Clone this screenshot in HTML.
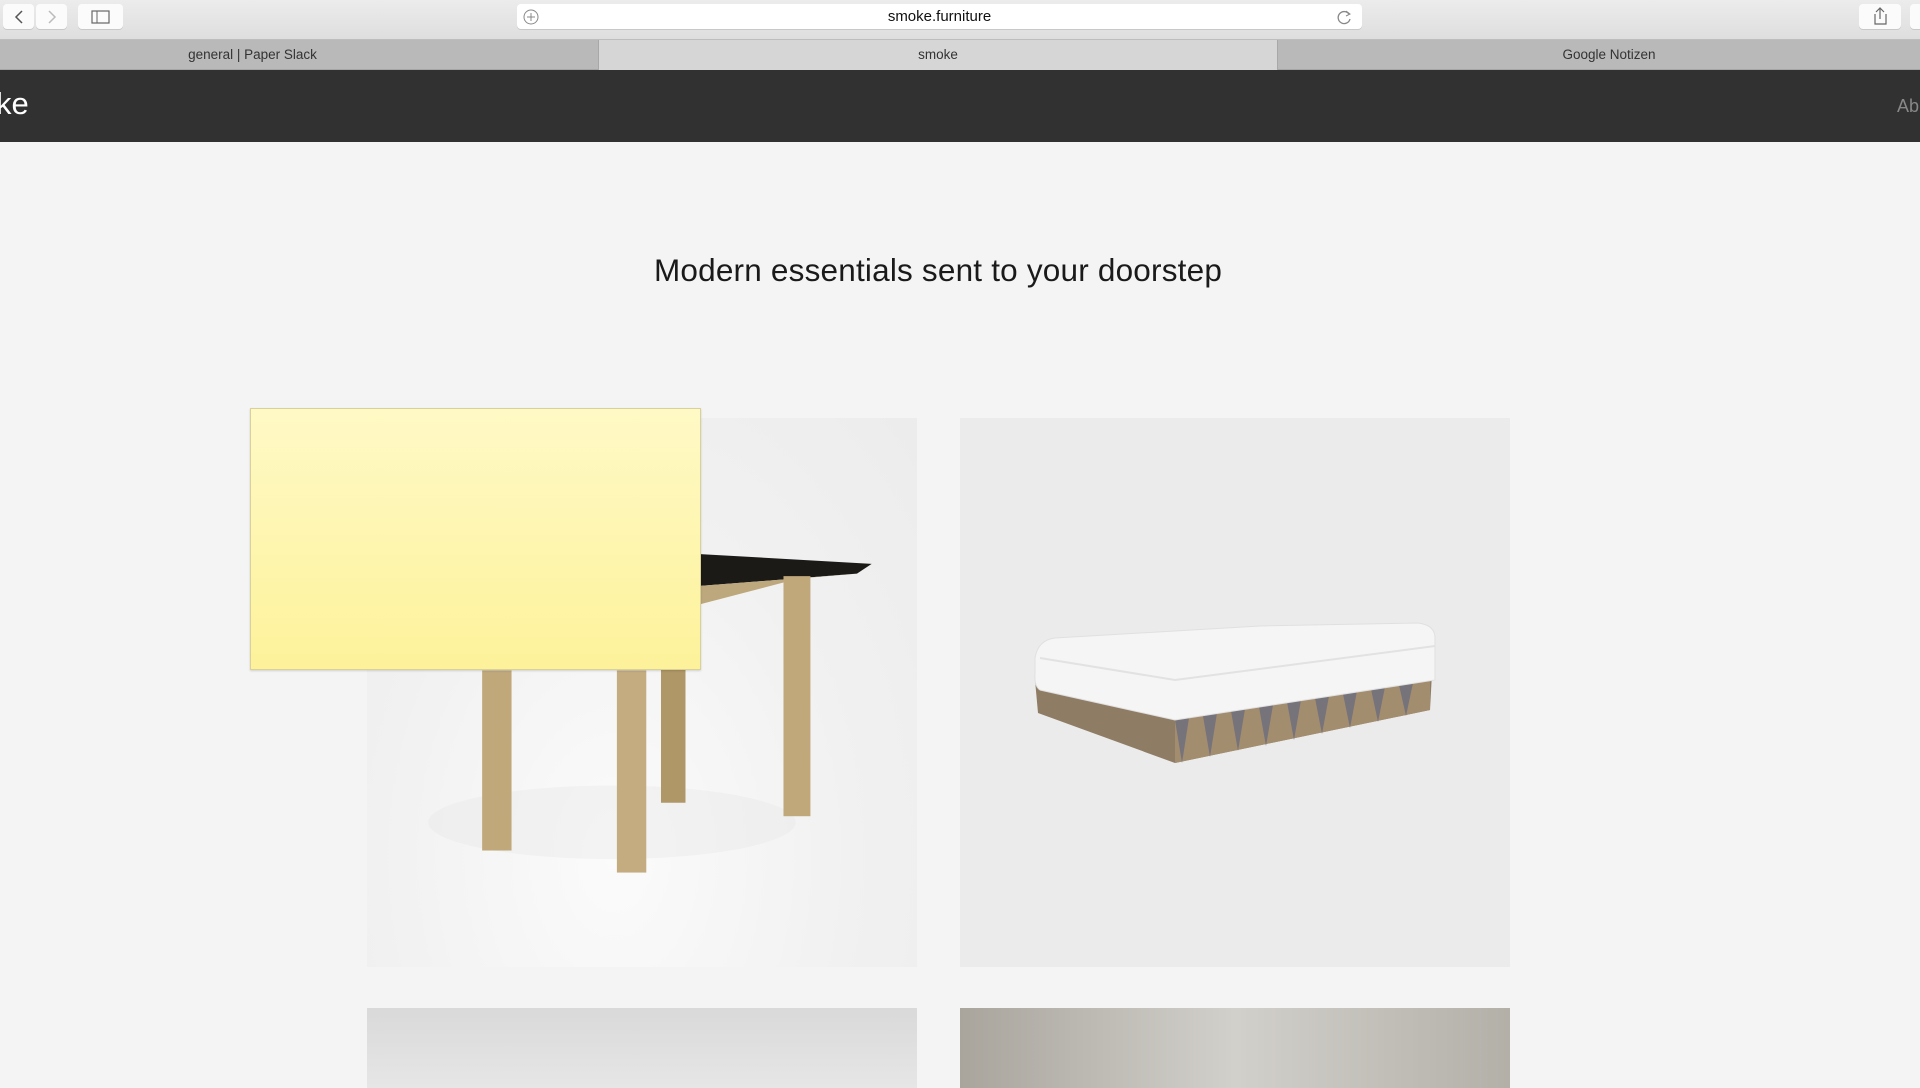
<!DOCTYPE html>
<html><head><meta charset="utf-8"><style>
*{margin:0;padding:0;box-sizing:border-box}
body{width:1920px;height:1080px;overflow:hidden;background:#f4f4f4;font-family:"Liberation Sans",sans-serif;position:relative}
.tb{position:absolute;left:0;top:0;width:1920px;height:40px;background:linear-gradient(#ececec,#dedede);border-bottom:1px solid #bdbdbd}
.btn{position:absolute;top:4px;height:25px;background:#fbfbfb;border-radius:4px;box-shadow:0 1px 0 #c8c8c8}
.url{position:absolute;left:517px;top:4px;width:845px;height:25px;background:#fff;border-radius:4px;box-shadow:0 1px 0 #c8c8c8;text-align:center;font-size:15px;line-height:25px;color:#111}
.tabs{position:absolute;left:0;top:40px;width:1920px;height:30px;background:#b9b9b9;font-size:13.5px;color:#333;border-bottom:1px solid #a5a5a5}
.tab{position:absolute;top:0;height:30px;line-height:30px;text-align:center;border-right:1px solid #a8a8a8}
.hdr{position:absolute;left:0;top:70px;width:1920px;height:72px;background:#313131;color:#fff}
h1{position:absolute;left:0;width:1876px;top:252px;text-align:center;font-weight:normal;font-size:31.5px;color:#1a1a1a;letter-spacing:.2px}
.card{position:absolute;width:550px}
</style></head><body>
<div class="tb">
 <div class="btn" style="left:3px;width:31px"><svg width="31" height="25"><path d="M19 7l-6 6 6 6" fill="none" stroke="#555" stroke-width="1.5"/></svg></div>
 <div class="btn" style="left:36px;width:31px"><svg width="31" height="25"><path d="M13 7l6 6-6 6" fill="none" stroke="#bbb" stroke-width="1.5"/></svg></div>
 <div class="btn" style="left:78px;width:45px"><svg width="45" height="25"><rect x="14" y="7" width="17" height="12" fill="none" stroke="#666" stroke-width="1.2"/><line x1="19" y1="7" x2="19" y2="19" stroke="#666"/></svg></div>
 <div class="url">smoke.furniture
  <svg style="position:absolute;left:5px;top:4px" width="18" height="18"><circle cx="9" cy="9" r="7" fill="none" stroke="#888"/><path d="M9 5v8M5 9h8" stroke="#888"/></svg>
  <svg style="position:absolute;right:8px;top:4px" width="18" height="18"><path d="M13 6a6 6 0 1 0 1 5" fill="none" stroke="#888" stroke-width="1.3"/><path d="M10 3l4 3-4 2" fill="none" stroke="#888"/></svg>
 </div>
 <div class="btn" style="left:1859px;width:42px"><svg width="42" height="25"><path d="M16 10v10h11V10M21 4v11M17 8l4-4 4 4" fill="none" stroke="#666" stroke-width="1.2"/></svg></div>
 <div class="btn" style="left:1910px;width:20px"></div>
</div>
<div class="tabs">
 <div class="tab" style="left:0;width:599px;padding-right:93px">general | Paper Slack</div>
 <div class="tab" style="left:599px;width:679px;background:#d6d6d6">smoke</div>
 <div class="tab" style="left:1278px;width:642px;border:none;padding-left:20px">Google Notizen</div>
</div>
<div class="hdr">
 <div style="position:absolute;left:-4px;top:16px;font-size:31px">ke</div>
 <div style="position:absolute;left:1897px;top:26px;font-size:18px;color:#888">Ab</div>
</div>
<h1>Modern essentials sent to your doorstep</h1>

<div class="card" style="left:367px;top:418px;height:549px;background:radial-gradient(ellipse at 45% 80%,#fbfbfb 0%,#f1f1f1 55%,#ececec 100%)">
<svg width="550" height="549" viewBox="0 0 449 448">
 <ellipse cx="200" cy="330" rx="150" ry="30" fill="#e4e4e4" opacity=".35"/>
 <polygon points="272,111 412,119 400,127 272,137" fill="#1c1a16"/>
 <polygon points="272,137 400,127 352,131 272,152" fill="#bda77c"/>
 <rect x="340" y="129" width="22" height="196" fill="#c0a87b"/>
 <rect x="240" y="199" width="20" height="115" fill="#b09767"/>
 <rect x="204" y="206" width="24" height="165" fill="#c4ac80"/>
 <rect x="94" y="206" width="24" height="147" fill="#c0a87b"/>
</svg></div>

<div class="card" style="left:960px;top:418px;height:549px;background:#ebebeb">
<svg width="550" height="549" viewBox="0 0 550 549">
 <polygon points="75,262 78,295 215,345 470,292 472,255" fill="#8f7c64"/>
 <polygon points="215,302 470,260 470,292 215,345" fill="#a38d6f"/>
 <g fill="#77737a">
  <polygon points="215,302 222,345 229,300"/><polygon points="243,298 250,339 257,295"/><polygon points="271,293 278,333 285,291"/><polygon points="299,289 306,328 313,287"/><polygon points="327,284 334,322 341,282"/><polygon points="355,280 362,316 369,278"/><polygon points="383,276 390,310 397,273"/><polygon points="411,271 418,304 425,269"/><polygon points="439,267 446,298 453,265"/>
 </g>
 <path d="M75,240 Q78,222 95,220 L300,208 L458,205 Q475,207 475,220 L475,262 L215,302 L80,272 Q74,268 75,255 Z" fill="#f5f5f5" stroke="#e0e0e0"/>
 <path d="M80,240 L215,262 L475,228" fill="none" stroke="#e2e2e2" stroke-width="2"/>
</svg></div>

<div class="card" style="left:367px;top:1008px;height:80px;background:linear-gradient(#d9d9d9,#e6e6e6)"></div>
<div class="card" style="left:960px;top:1008px;height:80px;background:linear-gradient(90deg,#a9a59d,#d2d0cb 50%,#b3b0a8)"></div>

<div style="position:absolute;left:250px;top:408px;width:451px;height:262px;background:linear-gradient(#fff9c6,#fdf29a);border:1px solid #d9d199;box-shadow:0 1px 2px rgba(0,0,0,.15)"></div>
</body></html>
